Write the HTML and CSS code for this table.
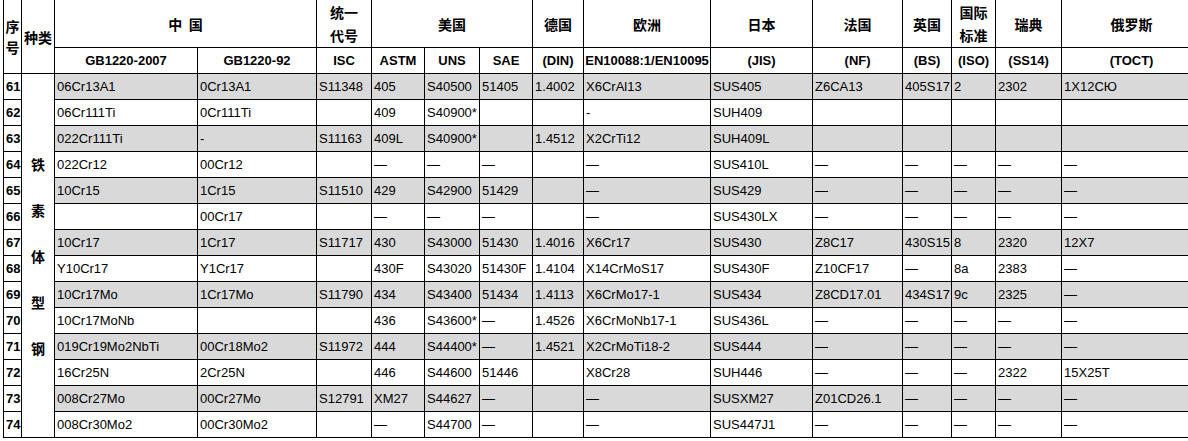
FILE: index.html
```html
<!DOCTYPE html>
<html lang="zh">
<head>
<meta charset="utf-8">
<title>铁素体型钢牌号对照表</title>
<link rel="stylesheet" href="styles.css">
</head>
<body>
<table class="grade-table">
  <colgroup>
    <col class="c-no"><col class="c-kind"><col class="c-gb07"><col class="c-gb92"><col class="c-isc">
    <col class="c-astm"><col class="c-uns"><col class="c-sae"><col class="c-din"><col class="c-en">
    <col class="c-jis"><col class="c-nf"><col class="c-bs"><col class="c-iso"><col class="c-ss"><col class="c-toct">
  </colgroup>
  <thead>
    <tr class="hr1">
      <th rowspan="2" class="cjk stack"><span class="ln">序</span><span class="ln">号</span></th>
      <th rowspan="2" class="cjk">种类</th>
      <th colspan="2" class="cjk">中&nbsp;&nbsp;国</th>
      <th class="cjk stack2"><span class="ln">统一</span><span class="ln">代号</span></th>
      <th colspan="3" class="cjk">美国</th>
      <th class="cjk">德国</th>
      <th class="cjk">欧洲</th>
      <th class="cjk">日本</th>
      <th class="cjk">法国</th>
      <th class="cjk">英国</th>
      <th class="cjk stack2"><span class="ln">国际</span><span class="ln">标准</span></th>
      <th class="cjk">瑞典</th>
      <th class="cjk">俄罗斯</th>
    </tr>
    <tr class="hr2">
      <th>GB1220-2007</th>
      <th>GB1220-92</th>
      <th>ISC</th>
      <th>ASTM</th>
      <th>UNS</th>
      <th>SAE</th>
      <th>(DIN)</th>
      <th>EN10088:1/EN10095</th>
      <th>(JIS)</th>
      <th>(NF)</th>
      <th>(BS)</th>
      <th>(ISO)</th>
      <th>(SS14)</th>
      <th>(TOCT)</th>
    </tr>
  </thead>
  <tbody>
    <tr class="shade">
      <td class="no">61</td>
      <td rowspan="14" class="kind cjk"><span class="kl">铁</span><span class="kl">素</span><span class="kl">体</span><span class="kl">型</span><span class="kl">钢</span></td>
      <td>06Cr13A1</td><td>0Cr13A1</td><td>S11348</td><td>405</td><td>S40500</td><td>51405</td><td>1.4002</td><td>X6CrAl13</td><td>SUS405</td><td>Z6CA13</td><td>405S17</td><td>2</td><td>2302</td><td>1X12CЮ</td>
    </tr>
    <tr>
      <td class="no">62</td>
      <td>06Cr111Ti</td><td>0Cr111Ti</td><td></td><td>409</td><td>S40900*</td><td></td><td></td><td>-</td><td>SUH409</td><td></td><td></td><td></td><td></td><td></td>
    </tr>
    <tr class="shade">
      <td class="no">63</td>
      <td>022Cr111Ti</td><td>-</td><td>S11163</td><td>409L</td><td>S40900*</td><td></td><td>1.4512</td><td>X2CrTi12</td><td>SUH409L</td><td></td><td></td><td></td><td></td><td></td>
    </tr>
    <tr>
      <td class="no">64</td>
      <td>022Cr12</td><td>00Cr12</td><td></td><td>—</td><td>—</td><td>—</td><td></td><td>—</td><td>SUS410L</td><td>—</td><td>—</td><td>—</td><td>—</td><td>—</td>
    </tr>
    <tr class="shade">
      <td class="no">65</td>
      <td>10Cr15</td><td>1Cr15</td><td>S11510</td><td>429</td><td>S42900</td><td>51429</td><td></td><td>—</td><td>SUS429</td><td>—</td><td>—</td><td>—</td><td>—</td><td>—</td>
    </tr>
    <tr>
      <td class="no">66</td>
      <td></td><td>00Cr17</td><td></td><td>—</td><td>—</td><td>—</td><td></td><td>—</td><td>SUS430LX</td><td>—</td><td>—</td><td>—</td><td>—</td><td>—</td>
    </tr>
    <tr class="shade">
      <td class="no">67</td>
      <td>10Cr17</td><td>1Cr17</td><td>S11717</td><td>430</td><td>S43000</td><td>51430</td><td>1.4016</td><td>X6Cr17</td><td>SUS430</td><td>Z8C17</td><td>430S15</td><td>8</td><td>2320</td><td>12X7</td>
    </tr>
    <tr>
      <td class="no">68</td>
      <td>Y10Cr17</td><td>Y1Cr17</td><td></td><td>430F</td><td>S43020</td><td>51430F</td><td>1.4104</td><td>X14CrMoS17</td><td>SUS430F</td><td>Z10CF17</td><td>—</td><td>8a</td><td>2383</td><td>—</td>
    </tr>
    <tr class="shade">
      <td class="no">69</td>
      <td>10Cr17Mo</td><td>1Cr17Mo</td><td>S11790</td><td>434</td><td>S43400</td><td>51434</td><td>1.4113</td><td>X6CrMo17-1</td><td>SUS434</td><td>Z8CD17.01</td><td>434S17</td><td>9c</td><td>2325</td><td>—</td>
    </tr>
    <tr>
      <td class="no">70</td>
      <td>10Cr17MoNb</td><td></td><td></td><td>436</td><td>S43600*</td><td>—</td><td>1.4526</td><td>X6CrMoNb17-1</td><td>SUS436L</td><td>—</td><td>—</td><td>—</td><td>—</td><td>—</td>
    </tr>
    <tr class="shade">
      <td class="no">71</td>
      <td>019Cr19Mo2NbTi</td><td>00Cr18Mo2</td><td>S11972</td><td>444</td><td>S44400*</td><td>—</td><td>1.4521</td><td>X2CrMoTi18-2</td><td>SUS444</td><td>—</td><td>—</td><td>—</td><td>—</td><td>—</td>
    </tr>
    <tr>
      <td class="no">72</td>
      <td>16Cr25N</td><td>2Cr25N</td><td></td><td>446</td><td>S44600</td><td>51446</td><td></td><td>X8Cr28</td><td>SUH446</td><td>—</td><td>—</td><td>—</td><td>2322</td><td>15X25T</td>
    </tr>
    <tr class="shade">
      <td class="no">73</td>
      <td>008Cr27Mo</td><td>00Cr27Mo</td><td>S12791</td><td>XM27</td><td>S44627</td><td>—</td><td></td><td>—</td><td>SUSXM27</td><td>Z01CD26.1</td><td>—</td><td>—</td><td>—</td><td>—</td>
    </tr>
    <tr>
      <td class="no">74</td>
      <td>008Cr30Mo2</td><td>00Cr30Mo2</td><td></td><td>—</td><td>S44700</td><td>—</td><td></td><td>—</td><td>SUS447J1</td><td>—</td><td>—</td><td>—</td><td>—</td><td>—</td>
    </tr>
  </tbody>
</table>
</body>
</html>
```

FILE: styles.css
```css
html, body {
  margin: 0;
  padding: 0;
  background: #ffffff;
  overflow: hidden;
}

body {
  font-family: "Liberation Sans", Arial, "Noto Sans CJK SC", sans-serif;
  font-size: 13px;
  color: #000000;
}

.grade-table {
  border-collapse: collapse;
  table-layout: fixed;
  width: 1198px;
  margin: -1px 0 0 3px;
}

.c-no { width: 18px; }
.c-kind { width: 33px; }
.c-gb07 { width: 143px; }
.c-gb92 { width: 119px; }
.c-isc { width: 55px; }
.c-astm { width: 53px; }
.c-uns { width: 55px; }
.c-sae { width: 53px; }
.c-din { width: 51px; }
.c-en { width: 127px; }
.c-jis { width: 102px; }
.c-nf { width: 90px; }
.c-bs { width: 49px; }
.c-iso { width: 44px; }
.c-ss { width: 66px; }
.c-toct { width: 140px; }

.grade-table th,
.grade-table td {
  border: 1px solid #000000;
  padding: 0 2px;
  line-height: 16px;
  white-space: nowrap;
  overflow: hidden;
}

.grade-table th {
  font-weight: bold;
  text-align: center;
  padding: 0;
}

.hr1 { height: 48px; }
.hr2 { height: 26px; }
.grade-table tbody tr { height: 26px; }

.cjk {
  font-family: "Noto Sans CJK SC", "Liberation Sans", sans-serif;
  font-size: 14px;
}

.ln {
  display: block;
  height: 20px;
  line-height: 20px;
  overflow: hidden;
}

.stack .ln + .ln { margin-top: 1px; }
.stack { padding-top: 2px; }
.stack2 .ln + .ln { margin-top: 3px; }

.grade-table td {
  text-align: left;
}

.grade-table td.no {
  font-weight: bold;
  padding: 0 0 0 2px;
  background: #ffffff;
}

.grade-table td.kind {
  background: #ffffff;
  text-align: center;
  font-weight: bold;
  padding: 0;
}

.kl {
  display: block;
  height: 20px;
  line-height: 20px;
}

.kl + .kl { margin-top: 26px; }

.shade td {
  background: #d9d9d9;
}
```
